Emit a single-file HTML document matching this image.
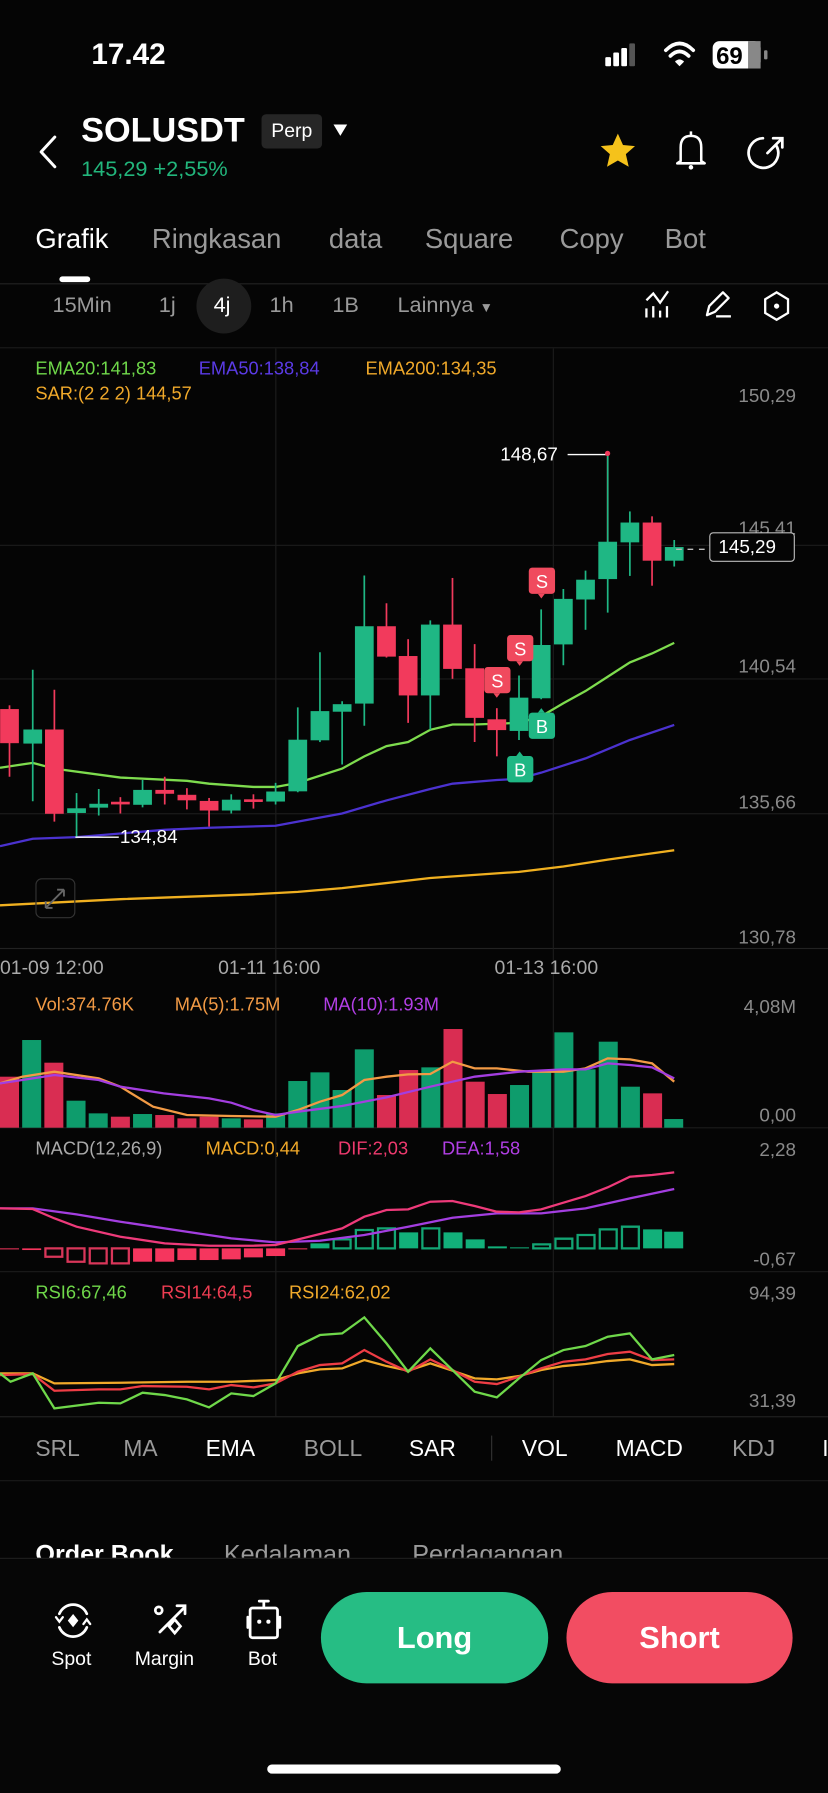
<!DOCTYPE html>
<html><head><meta charset="utf-8"><style>
html,body{margin:0;padding:0;background:#000;width:828px;height:1792px;overflow:hidden}
#w{position:absolute;left:0;top:0;width:725px;height:1569px;transform:scale(1.142069);transform-origin:0 0;background:#050505;font-family:"Liberation Sans",sans-serif;color:#fff}
.t{position:absolute;white-space:nowrap;line-height:1}
.g{color:#9a9a9a}
.hl{position:absolute;left:0;width:725px;height:1px;background:#1c1c1c}
.ax{position:absolute;right:28px;color:#8a8a8a;font-size:16.5px;line-height:1}
svg{position:absolute;left:0;top:0}
</style></head><body><div id="w">
<!-- status -->
<div class="t" style="left:80px;top:34px;font-size:26px;font-weight:bold">17.42</div>
<svg width="725" height="100" style="top:0">
<rect x="530" y="50" width="5" height="8" rx="1" fill="#fff"/><rect x="537" y="46" width="5" height="12" rx="1" fill="#fff"/><rect x="544" y="42" width="5" height="16" rx="1" fill="#fff"/><rect x="551" y="38" width="5" height="20" rx="1" fill="#555"/>
<path d="M583 44 Q595 32 607 44" stroke="#fff" stroke-width="3.2" fill="none" stroke-linecap="round"/><path d="M587 49 Q595 41 603 49" stroke="#fff" stroke-width="3.2" fill="none" stroke-linecap="round"/><path d="M591 54 L595 58 L599 54 Q595 50 591 54Z" fill="#fff"/>
<rect x="624" y="36" width="42" height="24" rx="6" fill="#fff"/><rect x="655" y="36" width="11" height="24" rx="0" fill="#888"/><rect x="669" y="44" width="3" height="8" rx="1" fill="#888"/>
<text x="627" y="56" font-size="21" font-weight="bold" fill="#000" font-family="Liberation Sans">69</text>
</svg>
<!-- header -->
<svg width="725" height="180" style="top:0">
<path d="M48 120 L36 133 L48 146" stroke="#fff" stroke-width="2.6" fill="none" stroke-linecap="round" stroke-linejoin="round"/>
<path d="M292 109 L304 109 L298 119Z" fill="#fff"/>
<path d="M541 117 L545.5 127 L556 128 L548 135 L550.5 146 L541 140.5 L531.5 146 L534 135 L526 128 L536.5 127Z" fill="#f5c21b"/>
<path d="M596 141 L596 129 Q596 119 605 119 Q614 119 614 129 L614 141 L617 143 L593 143Z" stroke="#fff" stroke-width="2.2" fill="none" stroke-linejoin="round"/><path d="M605 115 L605 119" stroke="#fff" stroke-width="2.2"/><circle cx="605" cy="146.5" r="2" fill="#fff"/>
<path d="M680 128 A13 13 0 1 1 668 121" stroke="#fff" stroke-width="2.4" fill="none" stroke-linecap="round"/><path d="M672 134 L684 122 M677 121 L685 121 L685 129" stroke="#fff" stroke-width="2.4" fill="none" stroke-linecap="round"/>
</svg>
<div class="t" style="left:71px;top:100px;font-size:30px;font-weight:bold">SOLUSDT</div>
<div class="t" style="left:229px;top:100px;width:53px;height:30px;background:#262626;border-radius:4px;font-size:17px;line-height:30px;text-align:center">Perp</div>
<div class="t" style="left:71px;top:139px;font-size:19px;color:#22b67c">145,29 +2,55%</div>
<!-- tabs -->
<div class="t" style="left:31px;top:198px;font-size:24px">Grafik</div>
<div class="t g" style="left:133px;top:198px;font-size:24px">Ringkasan</div>
<div class="t g" style="left:288px;top:198px;font-size:24px">data</div>
<div class="t g" style="left:372px;top:198px;font-size:24px">Square</div>
<div class="t g" style="left:490px;top:198px;font-size:24px">Copy</div>
<div class="t g" style="left:582px;top:198px;font-size:24px">Bot</div>
<div style="position:absolute;left:52px;top:242px;width:27px;height:5px;border-radius:3px;background:#fff"></div>
<div class="hl" style="top:248px;background:#222"></div>
<!-- timeframe -->
<div style="position:absolute;left:172px;top:244px;width:48px;height:48px;border-radius:24px;background:#1e1e1e"></div>
<div class="t g" style="left:46px;top:258px;font-size:19px">15Min</div>
<div class="t g" style="left:139px;top:258px;font-size:19px">1j</div>
<div class="t" style="left:187px;top:258px;font-size:19px">4j</div>
<div class="t g" style="left:236px;top:258px;font-size:19px">1h</div>
<div class="t g" style="left:291px;top:258px;font-size:19px">1B</div>
<div class="t g" style="left:348px;top:258px;font-size:19px">Lainnya <span style="font-size:12px">▼</span></div>
<svg width="725" height="320" style="top:0">
<path d="M566 263 L572 257 L578 265 L585 255" stroke="#fff" stroke-width="2" fill="none"/><path d="M566 270 V278 M572 268 V278 M578 272 V278 M584 268 V278" stroke="#fff" stroke-width="2"/>
<path d="M619 276 L621 268 L633 256 L638 261 L626 273 Z" stroke="#fff" stroke-width="2" fill="none" stroke-linejoin="round"/><path d="M627 277 H640" stroke="#fff" stroke-width="2"/>
<path d="M680 256 L690 262 L690 274 L680 280 L670 274 L670 262Z" stroke="#fff" stroke-width="2" fill="none"/><circle cx="680" cy="268" r="2.3" fill="#fff"/>
</svg>
<div class="hl" style="top:304px;background:#1a1a1a"></div>
<!-- grids -->
<div class="hl" style="top:477px"></div><div class="hl" style="top:594px"></div><div class="hl" style="top:712px"></div><div class="hl" style="top:830px;background:#222"></div>
<div class="hl" style="top:987px"></div><div class="hl" style="top:1113px"></div><div class="hl" style="top:1240px;background:#222"></div>
<div style="position:absolute;left:241px;top:305px;width:1px;height:935px;background:#1c1c1c"></div>
<div style="position:absolute;left:484px;top:305px;width:1px;height:935px;background:#1c1c1c"></div>
<!-- axes -->
<div class="ax" style="top:339px">150,29</div><div class="ax" style="top:455px">145,41</div><div class="ax" style="top:576px">140,54</div><div class="ax" style="top:695px">135,66</div><div class="ax" style="top:813px">130,78</div>
<div class="t" style="left:0;top:839px;font-size:17px;color:#aaa">01-09 12:00</div>
<div class="t" style="left:191px;top:839px;font-size:17px;color:#aaa">01-11 16:00</div>
<div class="t" style="left:433px;top:839px;font-size:17px;color:#aaa">01-13 16:00</div>
<div class="ax" style="top:874px">4,08M</div><div class="ax" style="top:969px">0,00</div>
<div class="ax" style="top:999px">2,28</div><div class="ax" style="top:1095px">-0,67</div>
<div class="ax" style="top:1125px">94,39</div><div class="ax" style="top:1219px">31,39</div>
<!-- legends -->
<div class="t" style="left:31px;top:316px;font-size:16px;color:#6fd84a">EMA20:141,83</div>
<div class="t" style="left:174px;top:316px;font-size:16px;color:#5b3be6">EMA50:138,84</div>
<div class="t" style="left:320px;top:316px;font-size:16px;color:#f0a92a">EMA200:134,35</div>
<div class="t" style="left:31px;top:338px;font-size:16px;color:#f0a92a">SAR:(2 2 2) 144,57</div>
<div class="t" style="left:31px;top:873px;font-size:16px;color:#f29a45">Vol:374.76K</div>
<div class="t" style="left:153px;top:873px;font-size:16px;color:#f29a45">MA(5):1.75M</div>
<div class="t" style="left:283px;top:873px;font-size:16px;color:#b23fe6">MA(10):1.93M</div>
<div class="t" style="left:31px;top:999px;font-size:16px;color:#aaa">MACD(12,26,9)</div>
<div class="t" style="left:180px;top:999px;font-size:16px;color:#f0a92a">MACD:0,44</div>
<div class="t" style="left:296px;top:999px;font-size:16px;color:#ee3a6e">DIF:2,03</div>
<div class="t" style="left:387px;top:999px;font-size:16px;color:#b23fe6">DEA:1,58</div>
<div class="t" style="left:31px;top:1125px;font-size:16px;color:#6fd84a">RSI6:67,46</div>
<div class="t" style="left:141px;top:1125px;font-size:16px;color:#ee3d52">RSI14:64,5</div>
<div class="t" style="left:253px;top:1125px;font-size:16px;color:#f0a92a">RSI24:62,02</div>
<!-- main chart -->
<svg width="725" height="1569">
<g transform="translate(0,297.7) scale(0.4623,0.3574)" fill="none" stroke-width="2" >
<polyline vector-effect="non-scaling-stroke" stroke="#f0b020" points="0,1385 228,1370 480,1358 564,1352 648,1343 815,1318 983,1303 1067,1290 1151,1273 1277,1250"/>
<polyline vector-effect="non-scaling-stroke" stroke="#4b32d0" points="0,1240 62,1222 145,1218 312,1200 396,1195 522,1190 564,1180 648,1160 732,1128 815,1100 857,1087 941,1078 983,1075 1025,1060 1109,1025 1193,980 1277,943"/>
<polyline vector-effect="non-scaling-stroke" stroke="#7edc4e" points="0,1048 62,1036 103,1050 228,1072 354,1080 396,1087 480,1095 522,1095 564,1085 648,1050 690,1020 732,995 773,985 815,955 857,942 899,942 983,938 1025,922 1067,890 1109,860 1151,825 1193,790 1235,768 1277,742"/>
<g stroke-width="1.5">
<g stroke="#f23a5c" fill="#f23a5c">
<line vector-effect="non-scaling-stroke" x1="18" y1="895" x2="18" y2="1070"/><rect x="1" y="905" width="34" height="82"/>
<line vector-effect="non-scaling-stroke" x1="103" y1="857" x2="103" y2="1180"/><rect x="86" y="955" width="34" height="205"/>
<line vector-effect="non-scaling-stroke" x1="228" y1="1120" x2="228" y2="1160"/><rect x="211" y="1132" width="34" height="5"/>
<line vector-effect="non-scaling-stroke" x1="312" y1="1070" x2="312" y2="1138"/><rect x="295" y="1103" width="34" height="8"/>
<line vector-effect="non-scaling-stroke" x1="354" y1="1098" x2="354" y2="1150"/><rect x="337" y="1115" width="34" height="12"/>
<line vector-effect="non-scaling-stroke" x1="396" y1="1122" x2="396" y2="1192"/><rect x="379" y="1130" width="34" height="22"/>
<line vector-effect="non-scaling-stroke" x1="480" y1="1113" x2="480" y2="1148"/><rect x="463" y="1126" width="34" height="5"/>
<line vector-effect="non-scaling-stroke" x1="732" y1="645" x2="732" y2="778"/><rect x="715" y="702" width="34" height="73"/>
<line vector-effect="non-scaling-stroke" x1="773" y1="733" x2="773" y2="938"/><rect x="756" y="775" width="34" height="95"/>
<line vector-effect="non-scaling-stroke" x1="857" y1="583" x2="857" y2="830"/><rect x="840" y="698" width="34" height="107"/>
<line vector-effect="non-scaling-stroke" x1="899" y1="745" x2="899" y2="985"/><rect x="882" y="805" width="34" height="120"/>
<line vector-effect="non-scaling-stroke" x1="941" y1="902" x2="941" y2="1020"/><rect x="924" y="930" width="34" height="25"/>
<line vector-effect="non-scaling-stroke" x1="1235" y1="432" x2="1235" y2="602"/><rect x="1218" y="448" width="34" height="92"/>
<line vector-effect="non-scaling-stroke" x1="1151" y1="277" x2="1151" y2="495"/>
</g>
<g stroke="#1fb784" fill="#1fb784">
<line vector-effect="non-scaling-stroke" x1="62" y1="808" x2="62" y2="1130"/><rect x="45" y="955" width="34" height="33"/>
<line vector-effect="non-scaling-stroke" x1="145" y1="1110" x2="145" y2="1218"/><rect x="128" y="1148" width="34" height="10"/>
<line vector-effect="non-scaling-stroke" x1="187" y1="1100" x2="187" y2="1165"/><rect x="170" y="1137" width="34" height="8"/>
<line vector-effect="non-scaling-stroke" x1="270" y1="1078" x2="270" y2="1145"/><rect x="253" y="1103" width="34" height="35"/>
<line vector-effect="non-scaling-stroke" x1="438" y1="1113" x2="438" y2="1160"/><rect x="421" y="1127" width="34" height="25"/>
<line vector-effect="non-scaling-stroke" x1="522" y1="1085" x2="522" y2="1138"/><rect x="505" y="1107" width="34" height="23"/>
<line vector-effect="non-scaling-stroke" x1="564" y1="900" x2="564" y2="1108"/><rect x="547" y="980" width="34" height="125"/>
<line vector-effect="non-scaling-stroke" x1="606" y1="765" x2="606" y2="985"/><rect x="589" y="910" width="34" height="70"/>
<line vector-effect="non-scaling-stroke" x1="648" y1="885" x2="648" y2="1040"/><rect x="631" y="893" width="34" height="17"/>
<line vector-effect="non-scaling-stroke" x1="690" y1="577" x2="690" y2="945"/><rect x="673" y="702" width="34" height="188"/>
<line vector-effect="non-scaling-stroke" x1="815" y1="687" x2="815" y2="955"/><rect x="798" y="698" width="34" height="172"/>
<line vector-effect="non-scaling-stroke" x1="983" y1="822" x2="983" y2="980"/><rect x="966" y="877" width="34" height="80"/>
<line vector-effect="non-scaling-stroke" x1="1025" y1="660" x2="1025" y2="880"/><rect x="1008" y="748" width="34" height="129"/>
<line vector-effect="non-scaling-stroke" x1="1067" y1="610" x2="1067" y2="797"/><rect x="1050" y="635" width="34" height="110"/>
<line vector-effect="non-scaling-stroke" x1="1109" y1="565" x2="1109" y2="710"/><rect x="1092" y="588" width="34" height="47"/>
<line vector-effect="non-scaling-stroke" x1="1151" y1="277" x2="1151" y2="668"/><rect x="1134" y="495" width="34" height="90"/>
<line vector-effect="non-scaling-stroke" x1="1193" y1="420" x2="1193" y2="578"/><rect x="1176" y="448" width="34" height="47"/>
<line vector-effect="non-scaling-stroke" x1="1277" y1="490" x2="1277" y2="555"/><rect x="1260" y="508" width="34" height="32"/>
</g></g></g>
<line x1="497" y1="398" x2="531" y2="398" stroke="#fff" stroke-width="1.2"/><circle cx="532" cy="397" r="2.3" fill="#f23a5c"/>
<line x1="66" y1="733" x2="104" y2="733" stroke="#fff" stroke-width="1.2"/>
<line x1="592" y1="481" x2="620" y2="481" stroke="#bbb" stroke-width="1.2" stroke-dasharray="5 5"/>
<rect x="621.5" y="466.5" width="74" height="25" rx="3" fill="#050505" stroke="#bbb"/>
<rect x="31.5" y="769.5" width="34" height="34" rx="5" fill="none" stroke="#333"/>
<path d="M40 795 L56 779 M40 795 V789 M40 795 H46 M56 779 V785 M56 779 H50" stroke="#666" stroke-width="1.6" fill="none"/>
<!-- markers -->
<g font-family="Liberation Sans" font-size="16" text-anchor="middle" fill="#fff">
<rect x="463" y="497" width="23" height="23" rx="3" fill="#f04a5e"/><path d="M471 520 L474 524 L477 520Z" fill="#f04a5e"/><text x="474.5" y="515">S</text>
<rect x="444" y="556" width="23" height="23" rx="3" fill="#f04a5e"/><path d="M452 579 L455 583 L458 579Z" fill="#f04a5e"/><text x="455.5" y="574">S</text>
<rect x="424" y="584" width="23" height="23" rx="3" fill="#f04a5e"/><path d="M432 607 L435 611 L438 607Z" fill="#f04a5e"/><text x="435.5" y="602">S</text>
<rect x="463" y="624" width="23" height="23" rx="3" fill="#1fb784"/><path d="M471 624 L474 620 L477 624Z" fill="#1fb784"/><text x="474.5" y="642">B</text>
<rect x="444" y="662" width="23" height="23" rx="3" fill="#1fb784"/><path d="M452 662 L455 658 L458 662Z" fill="#1fb784"/><text x="455.5" y="680">B</text>
</g>
<!-- lower panels -->
<g transform="translate(0,858.1) scale(0.4623,0.2919)" fill="none" stroke-width="2">
<g stroke="none">
<g fill="#0e9c6c"><rect x="42" y="180" width="36" height="263"/><rect x="126" y="362" width="36" height="81"/><rect x="168" y="400" width="36" height="43"/><rect x="252" y="402" width="36" height="41"/><rect x="420" y="415" width="36" height="28"/><rect x="504" y="400" width="36" height="43"/><rect x="546" y="303" width="36" height="140"/><rect x="588" y="277" width="36" height="166"/><rect x="630" y="330" width="36" height="113"/><rect x="672" y="208" width="36" height="235"/><rect x="798" y="262" width="36" height="181"/><rect x="966" y="315" width="36" height="128"/><rect x="1008" y="270" width="36" height="173"/><rect x="1050" y="157" width="36" height="286"/><rect x="1092" y="268" width="36" height="175"/><rect x="1134" y="185" width="36" height="258"/><rect x="1176" y="320" width="36" height="123"/><rect x="1258" y="417" width="36" height="26"/></g>
<g fill="#d92d52"><rect x="0" y="290" width="36" height="153"/><rect x="84" y="248" width="36" height="195"/><rect x="210" y="410" width="36" height="33"/><rect x="294" y="405" width="36" height="38"/><rect x="336" y="415" width="36" height="28"/><rect x="378" y="410" width="36" height="33"/><rect x="462" y="418" width="36" height="25"/><rect x="714" y="345" width="36" height="98"/><rect x="756" y="270" width="36" height="173"/><rect x="840" y="147" width="36" height="296"/><rect x="882" y="305" width="36" height="138"/><rect x="924" y="342" width="36" height="101"/><rect x="1218" y="340" width="36" height="103"/></g>
</g>
<polyline vector-effect="non-scaling-stroke" stroke="#f29a45" points="0,310 42,290 103,275 187,295 228,320 290,380 354,405 438,408 522,410 564,390 606,365 648,345 690,300 732,290 773,283 815,282 857,245 899,265 941,265 1000,275 1067,275 1109,265 1151,235 1193,238 1235,250 1277,305"/>
<polyline vector-effect="non-scaling-stroke" stroke="#a33ee0" points="0,310 62,295 103,285 187,300 228,320 310,340 396,355 438,368 480,390 522,405 564,395 648,378 732,352 815,320 899,290 983,275 1067,268 1109,268 1151,250 1193,255 1235,262 1277,295"/>
<!-- macd hist -->
<g fill="#f5365e" stroke="none"><rect x="0" y="805" width="36" height="3"/><rect x="42" y="805" width="36" height="5"/><rect x="252" y="805" width="36" height="40"/><rect x="294" y="805" width="36" height="40"/><rect x="336" y="805" width="36" height="35"/><rect x="378" y="805" width="36" height="35"/><rect x="420" y="805" width="36" height="33"/><rect x="462" y="805" width="36" height="27"/><rect x="504" y="805" width="36" height="23"/><rect x="546" y="805" width="36" height="3"/></g>
<g stroke="#d9365a"><rect vector-effect="non-scaling-stroke" x="86" y="805" width="32" height="25"/><rect vector-effect="non-scaling-stroke" x="128" y="805" width="32" height="40"/><rect vector-effect="non-scaling-stroke" x="170" y="805" width="32" height="45"/><rect vector-effect="non-scaling-stroke" x="212" y="805" width="32" height="45"/></g>
<g fill="#12b07a" stroke="none"><rect x="588" y="790" width="36" height="15"/><rect x="756" y="757" width="36" height="48"/><rect x="840" y="757" width="36" height="48"/><rect x="882" y="778" width="36" height="27"/><rect x="924" y="799" width="36" height="6"/><rect x="966" y="802" width="36" height="3"/><rect x="1218" y="748" width="36" height="57"/><rect x="1258" y="755" width="36" height="50"/></g>
<g stroke="#13a574"><rect vector-effect="non-scaling-stroke" x="632" y="778" width="32" height="27"/><rect vector-effect="non-scaling-stroke" x="674" y="750" width="32" height="55"/><rect vector-effect="non-scaling-stroke" x="716" y="745" width="32" height="60"/><rect vector-effect="non-scaling-stroke" x="800" y="745" width="32" height="60"/><rect vector-effect="non-scaling-stroke" x="1010" y="793" width="32" height="12"/><rect vector-effect="non-scaling-stroke" x="1052" y="776" width="32" height="29"/><rect vector-effect="non-scaling-stroke" x="1094" y="765" width="32" height="40"/><rect vector-effect="non-scaling-stroke" x="1136" y="748" width="32" height="57"/><rect vector-effect="non-scaling-stroke" x="1178" y="740" width="32" height="65"/></g>
<polyline vector-effect="non-scaling-stroke" stroke="#a33ee0" points="0,685 62,685 145,703 228,725 354,755 438,775 522,787 606,782 690,765 773,740 857,713 941,700 1025,700 1109,685 1193,655 1277,627"/>
<polyline vector-effect="non-scaling-stroke" stroke="#ee3a7a" points="0,685 62,687 103,715 145,740 228,770 312,790 396,797 480,797 522,795 606,762 648,745 690,710 732,690 773,688 815,665 857,663 899,678 941,695 983,697 1025,688 1067,668 1109,648 1151,622 1193,590 1235,585 1277,577"/>
<!-- rsi -->
<polyline vector-effect="non-scaling-stroke" stroke="#f0a92a" points="0,1180 62,1180 103,1210 228,1208 354,1205 438,1205 522,1200 564,1180 606,1168 648,1165 690,1140 732,1158 773,1172 815,1150 857,1172 899,1195 941,1198 983,1188 1025,1170 1067,1158 1109,1152 1151,1143 1193,1138 1235,1155 1277,1152"/>
<polyline vector-effect="non-scaling-stroke" stroke="#ee3d45" points="0,1185 62,1182 103,1232 187,1228 228,1228 270,1218 354,1220 396,1228 438,1215 480,1222 522,1210 564,1175 606,1155 648,1150 690,1110 732,1145 773,1175 815,1138 857,1170 899,1205 941,1212 983,1190 1025,1165 1067,1145 1109,1138 1151,1122 1193,1115 1235,1140 1277,1138"/>
<polyline vector-effect="non-scaling-stroke" stroke="#6fd84a" points="0,1180 20,1205 62,1180 103,1285 187,1268 228,1270 270,1238 312,1245 354,1258 396,1282 438,1240 480,1248 522,1210 564,1098 606,1065 648,1060 690,1012 732,1090 773,1175 815,1105 857,1170 899,1235 941,1252 983,1195 1025,1140 1067,1110 1109,1098 1151,1070 1193,1060 1235,1138 1277,1125"/>
</g>
</svg>
<div class="t" style="left:438px;top:390px;font-size:16.5px">148,67</div>
<div class="t" style="left:105px;top:725px;font-size:16.5px">134,84</div>
<div class="t" style="left:629px;top:471px;font-size:16.5px">145,29</div>
<!-- indicator row -->
<div class="t g" style="left:31px;top:1259px;font-size:20px">SRL</div>
<div class="t g" style="left:108px;top:1259px;font-size:20px">MA</div>
<div class="t" style="left:180px;top:1259px;font-size:20px">EMA</div>
<div class="t g" style="left:266px;top:1259px;font-size:20px">BOLL</div>
<div class="t" style="left:358px;top:1259px;font-size:20px">SAR</div>
<div style="position:absolute;left:430px;top:1257px;width:1px;height:22px;background:#333"></div>
<div class="t" style="left:457px;top:1259px;font-size:20px">VOL</div>
<div class="t" style="left:539px;top:1259px;font-size:20px">MACD</div>
<div class="t g" style="left:641px;top:1259px;font-size:20px">KDJ</div>
<div class="t" style="left:720px;top:1259px;font-size:20px">I</div>
<div class="hl" style="top:1296px;background:#1a1a1a"></div>
<div class="t" style="left:31px;top:1350px;font-size:22px;font-weight:bold">Order Book</div>
<div class="t g" style="left:196px;top:1350px;font-size:22px">Kedalaman</div>
<div class="t g" style="left:361px;top:1350px;font-size:22px">Perdagangan</div>
<!-- bottom bar -->
<div style="position:absolute;left:0;top:1364px;width:725px;height:205px;background:#060606;border-top:1px solid #1e1e1e"></div>
<svg width="725" height="1569">
<g stroke="#fff" stroke-width="2.4" fill="none" stroke-linecap="round">
<path d="M52 1413 A13 13 0 0 1 76 1413"/><path d="M76 1425 A13 13 0 0 1 52 1425"/><path d="M64 1414 L68 1419 L64 1424 L60 1419Z" fill="#fff" stroke-width="1"/><path d="M49 1416 L52 1420 L55 1416 M73 1422 L76 1418 L79 1422" stroke-width="2"/>
<path d="M140 1429 L162 1407 M155 1406 H162 V1413"/><circle cx="139" cy="1410" r="3"/><path d="M153 1418 L158 1424 L153 1430 L148 1424Z"/>
<rect x="219" y="1408" width="24" height="26" rx="2"/><path d="M231 1403 V1407 M227 1402 H235 M217 1416 V1425 M245 1416 V1425"/>
</g>
<circle cx="227" cy="1420" r="1.8" fill="#fff"/><circle cx="235" cy="1420" r="1.8" fill="#fff"/>
</svg>
<div class="t" style="left:45px;top:1444px;font-size:17px">Spot</div>
<div class="t" style="left:118px;top:1444px;font-size:17px">Margin</div>
<div class="t" style="left:217px;top:1444px;font-size:17px">Bot</div>
<div style="position:absolute;left:281px;top:1394px;width:199px;height:80px;border-radius:40px;background:#26bd84;color:#fff;font-weight:bold;font-size:27px;line-height:80px;text-align:center">Long</div>
<div style="position:absolute;left:496px;top:1394px;width:198px;height:80px;border-radius:40px;background:#f24d62;color:#fff;font-weight:bold;font-size:27px;line-height:80px;text-align:center">Short</div>
<div style="position:absolute;left:234px;top:1545px;width:257px;height:8px;border-radius:4px;background:#fff"></div>
</div></body></html>
